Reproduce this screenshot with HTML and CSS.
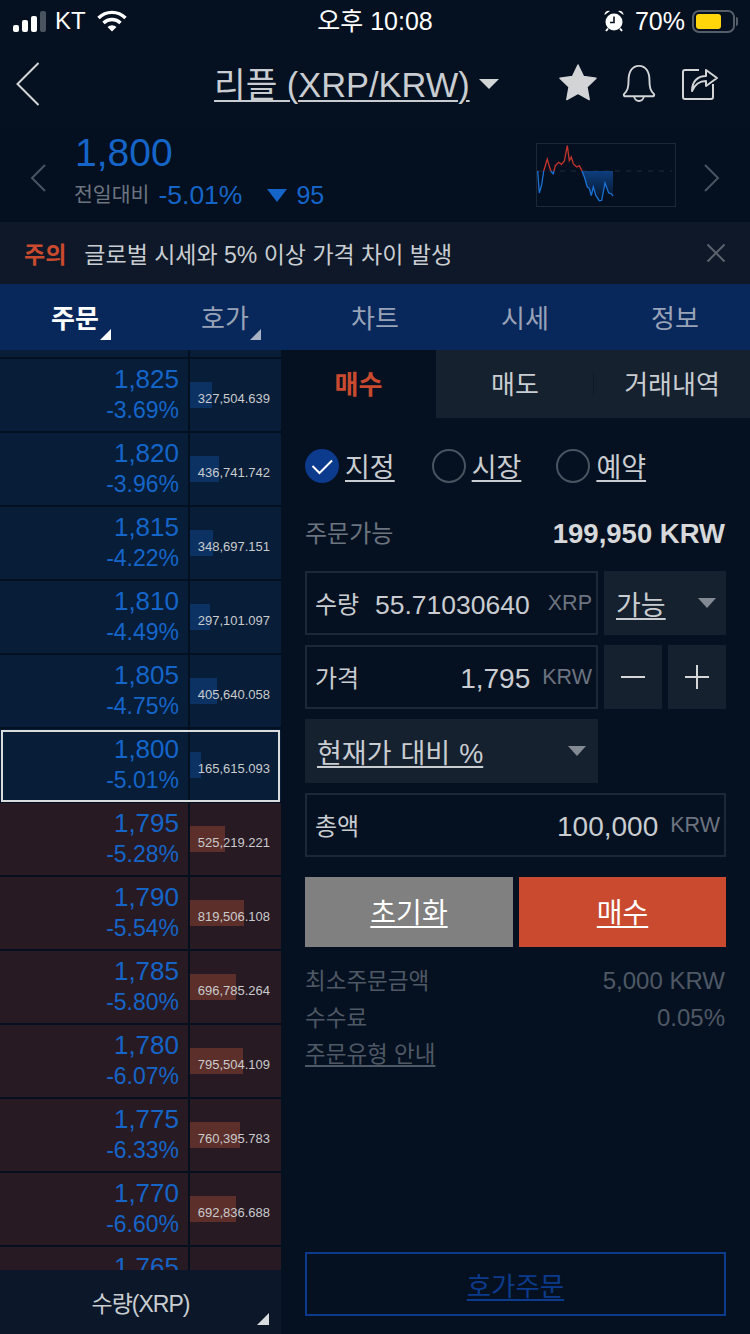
FILE: index.html
```html
<!DOCTYPE html>
<html lang="ko">
<head>
    <meta charset="UTF-8">
    <meta name="viewport" content="width=device-width, initial-scale=1.0">
    <title>리플 주문</title>
    <link rel="stylesheet" href="styles.css">
</head>
<body>
<div class="app">

    <div class="status-bar">
        <div class="status-left">
            <div class="signal">
                <span class="sig sig1"></span><span class="sig sig2"></span><span class="sig sig3"></span><span class="sig sig4"></span>
            </div>
            <span class="carrier">KT</span>
            <svg class="wifi" width="30" height="22" viewBox="0 0 30 22">
                <path d="M1.5 8 A19 19 0 0 1 28.500 8" fill="none" stroke="#fff" stroke-width="3.400"/>
                <path d="M6.500 13 A12 12 0 0 1 23.500 13" fill="none" stroke="#fff" stroke-width="3.400"/>
                <path d="M10.500 17 L15 21.500 L19.500 17 A6.500 6.500 0 0 0 10.500 17 Z" fill="#fff"/>
            </svg>
        </div>
        <div class="clock">오후 10:08</div>
        <div class="status-right">
            <svg width="22" height="24" viewBox="0 0 22 24">
                <circle cx="11" cy="13" r="8.500" fill="#fff"/>
                <path d="M1.500 6 A4 4 0 0 1 7 2 Z M20.500 6 A4 4 0 0 0 15 2 Z" fill="#fff"/>
                <path d="M3 22 L5 19.500 M19 22 L17 19.500" stroke="#fff" stroke-width="2"/>
                <path d="M11 7.500 V13.500 H7" fill="none" stroke="#051120" stroke-width="1.600"/>
            </svg>
            <span class="percent">70%</span>
            <div class="battery"><div class="battery-fill"></div></div>
            <div class="battery-cap"></div>
        </div>
    </div>

    <div class="header">
        <svg class="back" width="24" height="44" viewBox="0 0 24 44">
            <path d="M22.500 1 L1.500 22 L22.500 43" fill="none" stroke="#d4d6d8" stroke-width="2"/>
        </svg>
        <div class="title"><span class="title-text">리플 (XRP/KRW)</span><span class="caret title-caret"></span></div>
        <div class="header-icons">
            <svg width="38" height="38" viewBox="0 0 40 40">
                <path d="M20 1 L25.800 13.200 L39 15 L29.400 24.200 L31.800 37.500 L20 31 L8.200 37.500 L10.600 24.200 L1 15 L14.200 13.200 Z" fill="#d2d4d6" stroke="#d2d4d6" stroke-width="1.500" stroke-linejoin="round"/>
            </svg>
            <svg width="36" height="38" viewBox="0 0 36 40">
                <path d="M2 32 C6 28 7 25 7 17 C7 8 11 2 18 2 C25 2 29 8 29 17 C29 25 30 28 34 32 C34 33.500 33 34 32 34 H4 C3 34 2 33.500 2 32 Z" fill="none" stroke="#d2d4d6" stroke-width="2"/>
                <path d="M13 34 A5 5 0 0 0 23 34" fill="none" stroke="#d2d4d6" stroke-width="2"/>
            </svg>
            <svg width="38" height="38" viewBox="0 0 38 38">
                <path d="M18 6 H4 Q2 6 2 8 V33 Q2 35 4 35 H30 Q32 35 32 33 V20" fill="none" stroke="#d2d4d6" stroke-width="2"/>
                <path d="M11 27 C11 17 17 12 25 12 V6 L36 14 L25 22 V17 C19 17 14 20 11 27 Z" fill="#051120" stroke="#d2d4d6" stroke-width="2" stroke-linejoin="round"/>
            </svg>
        </div>
    </div>

    <div class="quote">
        <svg class="side-arrow" width="16" height="28" viewBox="0 0 16 28">
            <path d="M15 1 L2 14 L15 27" fill="none" stroke="#4a5360" stroke-width="2"/>
        </svg>
        <div class="quote-info">
            <div class="quote-price">1,800</div>
            <div class="quote-change">
                <span class="quote-label">전일대비</span>
                <span class="quote-rate">-5.01%</span>
                <span class="down-mark"></span>
                <span class="quote-diff">95</span>
            </div>
        </div>
        <svg class="spark" width="140" height="64" viewBox="0 0 140 64">
            <defs>
                <linearGradient id="sparkFill" x1="0" y1="0" x2="0" y2="1">
                    <stop offset="0" stop-color="#0e3f80"/>
                    <stop offset="1" stop-color="#0e3f80" stop-opacity="0.050"/>
                </linearGradient>
            </defs>
            <rect x="0.500" y="0.500" width="139" height="63" fill="none" stroke="#1c2838"/>
            <path d="M2 28 H136" stroke="#1f2a3a" stroke-width="1" stroke-dasharray="5 6"/>
            <path d="M46 28 L48.700 35 L51.300 44 L53.300 45.300 L55.300 52.700 L57.300 44 L60 52.700 L63.300 57.700 L65.700 57.300 L69 40 L72.700 50 L75.300 50.700 L77 53 V28 Z" fill="url(#sparkFill)"/>
            <path d="M1.700 28 L3.300 50 L5.700 41.700 L7.700 28 M15 28 L15.700 29.300 L17.300 30.700 L18 28 M46 28 L48.700 35 L51.300 44 L53.300 45.300 L55.300 52.700 L57.300 44 L60 52.700 L63.300 57.700 L65.700 57.300 L69 40 L72.700 50 L75.300 50.700 L77 53" fill="none" stroke="#1b72d6" stroke-width="1.300"/>
            <path d="M7.700 28 L11.300 16 L13.300 23.300 L15 28 M18 28 L19.300 22.700 L22.700 19.300 L25.300 21.300 L28.300 18.300 L31.300 2.700 L33.300 17.700 L35.300 14 L37.300 20.700 L40.700 24 L43.300 22.700 L46 28" fill="none" stroke="#c5352c" stroke-width="1.300"/>
        </svg>
        <svg class="side-arrow next" width="16" height="28" viewBox="0 0 16 28">
            <path d="M1 1 L14 14 L1 27" fill="none" stroke="#4a5360" stroke-width="2"/>
        </svg>
    </div>

    <div class="notice">
        <span class="notice-tag">주의</span>
        <span class="notice-text">글로벌 시세와 5% 이상 가격 차이 발생</span>
        <svg class="notice-close" width="20" height="20" viewBox="0 0 20 20">
            <path d="M1.500 1.500 L18.500 18.500 M18.500 1.500 L1.500 18.500" stroke="#5a626d" stroke-width="2"/>
        </svg>
    </div>

    <div class="tabs">
        <div class="tab active">주문<span class="corner"></span></div>
        <div class="tab">호가<span class="corner"></span></div>
        <div class="tab">차트</div>
        <div class="tab">시세</div>
        <div class="tab">정보</div>
    </div>

    <div class="main">
        <div class="book-col">
            <div class="book">
                <div class="row ask row-cut"><div class="cell-price"></div><div class="cell-qty"></div></div>

                <div class="row ask">
                    <div class="cell-price"><div class="price">1,825</div><div class="rate">-3.69%</div></div>
                    <div class="cell-qty"><div class="bar" style="width:22px"></div><span class="qty">327,504.639</span></div>
                </div>
                <div class="row ask">
                    <div class="cell-price"><div class="price">1,820</div><div class="rate">-3.96%</div></div>
                    <div class="cell-qty"><div class="bar" style="width:29px"></div><span class="qty">436,741.742</span></div>
                </div>
                <div class="row ask">
                    <div class="cell-price"><div class="price">1,815</div><div class="rate">-4.22%</div></div>
                    <div class="cell-qty"><div class="bar" style="width:23px"></div><span class="qty">348,697.151</span></div>
                </div>
                <div class="row ask">
                    <div class="cell-price"><div class="price">1,810</div><div class="rate">-4.49%</div></div>
                    <div class="cell-qty"><div class="bar" style="width:20px"></div><span class="qty">297,101.097</span></div>
                </div>
                <div class="row ask">
                    <div class="cell-price"><div class="price">1,805</div><div class="rate">-4.75%</div></div>
                    <div class="cell-qty"><div class="bar" style="width:27px"></div><span class="qty">405,640.058</span></div>
                </div>
                <div class="row ask current">
                    <div class="cell-price"><div class="price">1,800</div><div class="rate">-5.01%</div></div>
                    <div class="cell-qty"><div class="bar" style="width:11px"></div><span class="qty">165,615.093</span></div>
                </div>
                <div class="row bid">
                    <div class="cell-price"><div class="price">1,795</div><div class="rate">-5.28%</div></div>
                    <div class="cell-qty"><div class="bar" style="width:35px"></div><span class="qty">525,219.221</span></div>
                </div>
                <div class="row bid">
                    <div class="cell-price"><div class="price">1,790</div><div class="rate">-5.54%</div></div>
                    <div class="cell-qty"><div class="bar" style="width:54px"></div><span class="qty">819,506.108</span></div>
                </div>
                <div class="row bid">
                    <div class="cell-price"><div class="price">1,785</div><div class="rate">-5.80%</div></div>
                    <div class="cell-qty"><div class="bar" style="width:46px"></div><span class="qty">696,785.264</span></div>
                </div>
                <div class="row bid">
                    <div class="cell-price"><div class="price">1,780</div><div class="rate">-6.07%</div></div>
                    <div class="cell-qty"><div class="bar" style="width:53px"></div><span class="qty">795,504.109</span></div>
                </div>
                <div class="row bid">
                    <div class="cell-price"><div class="price">1,775</div><div class="rate">-6.33%</div></div>
                    <div class="cell-qty"><div class="bar" style="width:50px"></div><span class="qty">760,395.783</span></div>
                </div>
                <div class="row bid">
                    <div class="cell-price"><div class="price">1,770</div><div class="rate">-6.60%</div></div>
                    <div class="cell-qty"><div class="bar" style="width:46px"></div><span class="qty">692,836.688</span></div>
                </div>
                <div class="row bid">
                    <div class="cell-price"><div class="price">1,765</div></div>
                    <div class="cell-qty"></div>
                </div>
            </div>
            <div class="book-foot">수량(XRP)<span class="corner"></span></div>
        </div>

        <div class="order-col">
            <div class="order-tabs">
                <div class="order-tab buy">매수</div>
                <div class="order-tab sell">매도</div>
                <div class="order-tab history">거래내역</div>
            </div>

            <div class="form">
                <div class="radios">
                    <div class="radio radio-limit">
                        <svg class="radio-on" width="34" height="34" viewBox="0 0 34 34">
                            <circle cx="17" cy="17" r="17" fill="#0c3a8c"/>
                            <path d="M7.500 17 L14.500 24 L27 11.500" fill="none" stroke="#fff" stroke-width="2"/>
                        </svg>
                        <span>지정</span>
                    </div>
                    <div class="radio radio-market"><span class="radio-off"></span><span>시장</span></div>
                    <div class="radio"><span class="radio-off"></span><span>예약</span></div>
                </div>

                <div class="available">
                    <span class="available-label">주문가능</span>
                    <span class="available-value">199,950 KRW</span>
                </div>

                <div class="form-row first">
                    <div class="field short">
                        <span class="field-label">수량</span>
                        <span class="field-value small">55.71030640</span>
                        <span class="field-unit">XRP</span>
                    </div>
                    <div class="select narrow"><span class="select-text">가능</span><span class="caret"></span></div>
                </div>
                <div class="form-row">
                    <div class="field short">
                        <span class="field-label">가격</span>
                        <span class="field-value">1,795</span>
                        <span class="field-unit">KRW</span>
                    </div>
                    <div class="step">
                        <svg width="26" height="26" viewBox="0 0 26 26"><path d="M1 13 H25" stroke="#d4d6d8" stroke-width="2"/></svg>
                    </div>
                    <div class="step">
                        <svg width="26" height="26" viewBox="0 0 26 26"><path d="M1 13 H25 M13 1 V25" stroke="#d4d6d8" stroke-width="2"/></svg>
                    </div>
                </div>
                <div class="form-row">
                    <div class="select wide"><span class="select-text">현재가 대비 %</span><span class="caret"></span></div>
                </div>
                <div class="form-row">
                    <div class="field full">
                        <span class="field-label">총액</span>
                        <span class="field-value">100,000</span>
                        <span class="field-unit">KRW</span>
                    </div>
                </div>

                <div class="actions">
                    <div class="action reset">초기화</div>
                    <div class="action submit">매수</div>
                </div>

                <div class="info">
                    <div class="info-row"><span class="info-label">최소주문금액</span><span>5,000 KRW</span></div>
                    <div class="info-row"><span class="info-label">수수료</span><span>0.05%</span></div>
                    <div class="info-row"><span class="info-label info-link">주문유형 안내</span></div>
                </div>

                <div class="book-order">호가주문</div>
            </div>
        </div>
    </div>
</div>
</body>
</html>
```

FILE: styles.css
```css
* {
    box-sizing: border-box;
}
body {
    margin: 0;
    background-color: #051120;
    color: #c9cdd1;
    font-family: "Liberation Sans", "Noto Sans CJK KR", sans-serif;
}
.app {
    width: 750px;
    height: 1334px;
    display: flex;
    flex-direction: column;
    overflow: hidden;
}

/* status bar */
.status-bar {
    height: 42px;
    flex-shrink: 0;
    display: flex;
    align-items: center;
    justify-content: space-between;
    padding: 0 12px 0 13px;
    color: #fff;
    position: relative;
}
.status-left, .status-right {
    display: flex;
    align-items: center;
}
.signal {
    display: flex;
    align-items: flex-end;
    gap: 3px;
    height: 21px;
}
.sig {
    width: 6px;
    border-radius: 2px;
    background-color: #fff;
}
.sig1 { height: 7px; }
.sig2 { height: 12px; }
.sig3 { height: 16px; }
.sig4 { height: 21px; background-color: #4a5360; }
.carrier {
    font-size: 24px;
    margin-left: 9px;
}
.wifi {
    margin-left: 11px;
}
.clock {
    font-size: 25px;
    position: absolute;
    left: 0;
    right: 0;
    margin-top: -4px;
    text-align: center;
}
.percent {
    font-size: 25px;
    margin-left: 10px;
}
.battery {
    width: 43px;
    height: 23px;
    border: 2px solid #555d68;
    border-radius: 7px;
    margin-left: 7px;
    padding: 2px;
}
.battery-fill {
    width: 25px;
    height: 15px;
    background-color: #ffd60a;
    border-radius: 3px;
}
.battery-cap {
    width: 2px;
    height: 9px;
    margin-left: 1px;
    background-color: #555d68;
    border-radius: 0 2px 2px 0;
}

/* header */
.header {
    height: 86px;
    flex-shrink: 0;
    display: flex;
    align-items: center;
    padding: 0 31px 0 16px;
}
.back {
    margin-bottom: 2px;
}
.title {
    display: flex;
    align-items: center;
    margin: 0 0 6px 174px;
    font-size: 34.400px;
}
.title-text {
    text-decoration: underline;
    text-decoration-thickness: 2px;
    text-underline-offset: 3px;
}
.caret {
    width: 0;
    height: 0;
    border-left: 9px solid transparent;
    border-right: 9px solid transparent;
    border-top: 10px solid #838a94;
}
.title-caret {
    margin: 4px 0 0 9px;
    border-left-width: 10px;
    border-right-width: 10px;
    border-top-color: #d2d4d6;
}
.header-icons {
    margin: 0 0 4px auto;
    display: flex;
    align-items: center;
    gap: 24px;
}

/* quote */
.quote {
    height: 94px;
    flex-shrink: 0;
    display: flex;
    align-items: center;
    padding: 0 30px;
    background-color: #04101f;
}
.side-arrow {
    margin-top: 6px;
}
.quote-info {
    margin-left: 28px;
    margin-top: -8px;
}
.quote-price {
    font-size: 39px;
    line-height: 46px;
    color: #1565c9;
    margin-left: 1px;
}
.quote-change {
    display: flex;
    align-items: center;
    line-height: 34px;
    margin-top: 2px;
}
.quote-label {
    font-size: 20.500px;
    color: #6c7480;
}
.quote-rate {
    font-size: 26.500px;
    color: #1565c9;
    margin-left: 9px;
}
.down-mark {
    width: 0;
    height: 0;
    margin-left: 25px;
    border-left: 10px solid transparent;
    border-right: 10px solid transparent;
    border-top: 13px solid #1565c9;
}
.quote-diff {
    font-size: 25px;
    color: #1565c9;
    margin-left: 9px;
}
.spark {
    margin-left: auto;
    margin-right: 28px;
}

/* notice */
.notice {
    height: 62px;
    flex-shrink: 0;
    display: flex;
    align-items: center;
    padding: 0 24px;
    background-color: #0e1828;
}
.notice-tag {
    font-size: 23px;
    font-weight: 700;
    color: #c94a2e;
}
.notice-text {
    font-size: 23px;
    margin-left: 18px;
}
.notice-close {
    margin-left: auto;
}

/* tabs */
.tabs {
    height: 66px;
    flex-shrink: 0;
    display: flex;
    background-color: #08275b;
}
.tab {
    flex: 1;
    display: flex;
    align-items: center;
    justify-content: center;
    position: relative;
    padding-bottom: 2px;
    font-size: 26px;
    color: #98a3b8;
}
.tab.active {
    color: #fff;
    font-weight: 700;
}
.corner {
    position: absolute;
    right: 39px;
    bottom: 10px;
    width: 0;
    height: 0;
    border-left: 11px solid transparent;
    border-bottom: 11px solid #aab3c6;
}
.tab.active .corner {
    border-bottom-color: #fff;
}

/* order book */
.main {
    flex: 1;
    display: flex;
    min-height: 0;
}
.book-col {
    width: 281px;
    flex-shrink: 0;
    display: flex;
    flex-direction: column;
}
.book {
    flex: 1;
    min-height: 0;
    overflow: hidden;
    display: flex;
    flex-direction: column;
    gap: 2px;
    background-color: #04101f;
}
.row {
    height: 72px;
    flex-shrink: 0;
    display: flex;
    gap: 2px;
    position: relative;
}
.row-cut {
    height: 7px;
}
.ask > div {
    background-color: #071d38;
}
.bid > div {
    background-color: #281a23;
}
.cell-price {
    width: 188px;
    padding: 5px 9px 0 0;
    text-align: right;
}
.cell-qty {
    flex: 1;
    display: flex;
    align-items: center;
    justify-content: flex-end;
    padding-right: 11px;
    position: relative;
}
.price {
    font-size: 26px;
    line-height: 30px;
    color: #1565c9;
}
.rate {
    font-size: 23px;
    line-height: 32px;
    color: #1565c9;
}
.ask > .cell-qty > .bar {
    background-color: #0c3264;
}
.bid > .cell-qty > .bar {
    background-color: #5c2f2b;
}
.bar {
    position: absolute;
    left: 0;
    top: 23px;
    height: 26px;
}
.qty {
    font-size: 13px;
    color: #c9cbcd;
    position: relative;
    margin-top: 7px;
}
.current::after {
    content: "";
    position: absolute;
    left: 1px;
    right: 1px;
    top: 1px;
    bottom: -1px;
    border: 2px solid #d8dcdc;
}
.book-foot {
    height: 64px;
    flex-shrink: 0;
    position: relative;
    display: flex;
    align-items: center;
    justify-content: center;
    font-size: 23px;
    letter-spacing: -1px;
    background-color: #0c1829;
}
.book-foot .corner {
    right: 12px;
    bottom: 9px;
    border-left-width: 12px;
    border-bottom-width: 12px;
    border-bottom-color: #d8dcdc;
}

/* order form */
.order-col {
    flex: 1;
    display: flex;
    flex-direction: column;
    min-width: 0;
}
.order-tabs {
    height: 68px;
    flex-shrink: 0;
    display: flex;
    font-size: 26px;
}
.order-tab {
    display: flex;
    align-items: center;
    justify-content: center;
    padding-bottom: 3px;
}
.buy {
    width: 155px;
    color: #c94a2e;
    font-weight: 700;
}
.sell {
    width: 158px;
    background-color: #162130;
    position: relative;
}
.sell::after {
    content: "";
    position: absolute;
    right: 0;
    top: 23px;
    height: 22px;
    width: 1px;
    background-color: #0e1828;
}
.history {
    flex: 1;
    background-color: #162130;
}
.form {
    flex: 1;
    display: flex;
    flex-direction: column;
    padding: 31px 24px 18px;
}
.radios {
    display: flex;
    height: 34px;
}
.radio {
    display: flex;
    align-items: center;
    gap: 6px;
    font-size: 27px;
    margin-right: 37px;
}
.radio-market {
    margin-right: 35px;
}
.radio span:last-child {
    padding-bottom: 2px;
    text-decoration: underline;
    text-decoration-thickness: 2px;
    text-underline-offset: 3px;
}
.radio-off {
    width: 34px;
    height: 34px;
    border: 2px solid #4a5360;
    border-radius: 50%;
}
.available {
    display: flex;
    align-items: center;
    justify-content: space-between;
    height: 34px;
    margin-top: 34px;
    padding-right: 1px;
}
.available-label {
    font-size: 24px;
    color: #6c7480;
    margin-bottom: 5px;
}
.available-value {
    font-size: 27.500px;
    font-weight: 700;
    color: #d6d8da;
}
.form-row {
    display: flex;
    gap: 6px;
    margin-top: 10px;
}
.form-row.first {
    margin-top: 20px;
}
.field {
    height: 64px;
    display: flex;
    align-items: center;
    border: 2px solid #1c2838;
    padding: 0 4px 0 8px;
}
.short {
    width: 293px;
}
.full {
    width: 421px;
}
.field-label {
    font-size: 24px;
    margin-bottom: 2px;
}
.field-value {
    font-size: 28px;
    margin: 4px 0 0 auto;
}
.field-value.small {
    font-size: 26.500px;
    margin-right: 6px;
}
.field-unit {
    font-size: 21.500px;
    color: #6c7480;
    margin-left: 12px;
}
.select {
    height: 64px;
    display: flex;
    align-items: center;
    justify-content: space-between;
    background-color: #162130;
    padding: 0 10px 0 12px;
}
.narrow {
    width: 122px;
}
.wide {
    width: 293px;
    padding-right: 12px;
}
.select-text {
    font-size: 27px;
    word-spacing: 1.500px;
    text-decoration: underline;
    text-decoration-thickness: 2px;
    text-underline-offset: 3px;
}
.step {
    width: 58px;
    height: 64px;
    display: flex;
    align-items: center;
    justify-content: center;
    background-color: #162130;
}
.actions {
    display: flex;
    gap: 6px;
    margin-top: 20px;
}
.action {
    height: 70px;
    display: flex;
    align-items: center;
    justify-content: center;
    padding-bottom: 2px;
    color: #fff;
    font-size: 28px;
    text-decoration: underline;
    text-decoration-thickness: 2px;
    text-underline-offset: 3px;
}
.reset {
    width: 208px;
    background-color: #808080;
}
.submit {
    flex: 1;
    background-color: #c94a2e;
}
.info {
    margin-top: 16px;
    color: #4f5865;
    font-size: 24px;
}
.info-row {
    height: 36.500px;
    display: flex;
    align-items: center;
    justify-content: space-between;
    padding-right: 1px;
}
.info-label {
    font-size: 22.500px;
    margin-bottom: 4px;
}
.info-link {
    text-decoration: underline;
    text-underline-offset: 3px;
}
.book-order {
    height: 64px;
    margin-top: auto;
    display: flex;
    align-items: center;
    justify-content: center;
    border: 2px solid #0c3a8c;
    color: #0c3a8c;
    font-size: 26.500px;
    text-decoration: underline;
    text-decoration-thickness: 2px;
    text-underline-offset: 3px;
}
```
